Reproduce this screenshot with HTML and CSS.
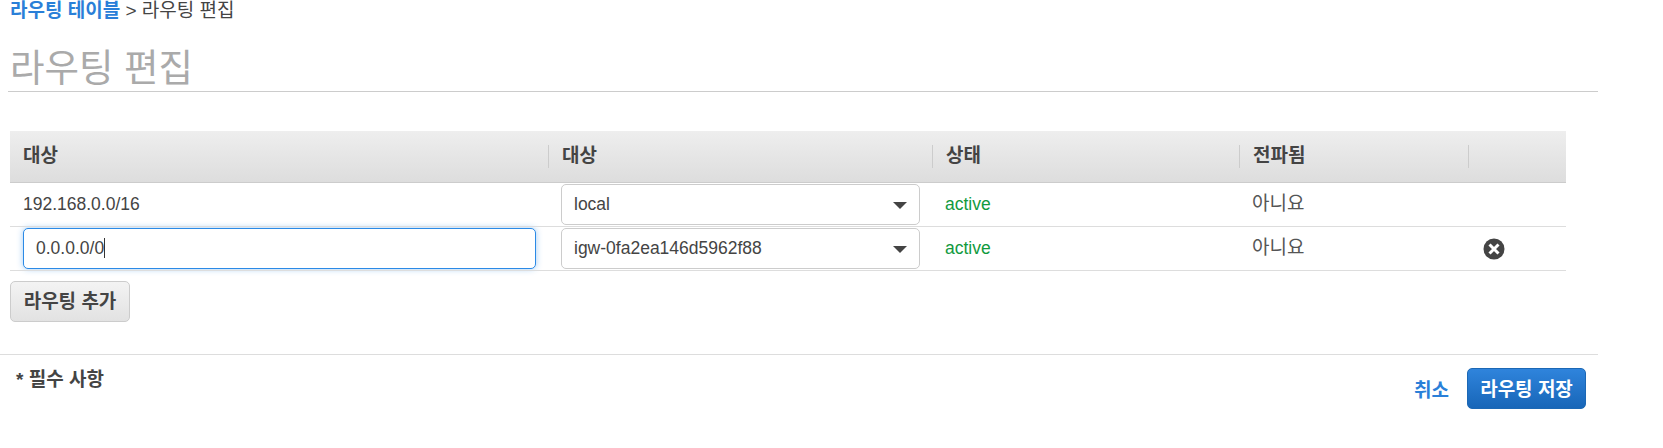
FILE: index.html
```html
<!DOCTYPE html>
<html lang="ko">
<head>
  <meta charset="UTF-8">
  <title>라우팅 편집</title>
  <link rel="stylesheet" href="styles.css">
</head>
<body>
  <div class="page">
    <div class="breadcrumb"><a href="#">라우팅 테이블</a> &gt; 라우팅 편집</div>
    <h1 class="title">라우팅 편집</h1>

    <table class="routes">
      <thead>
        <tr>
          <th class="col-first"><span class="th-label th-first">대상</span></th>
          <th class="col-target"><span class="th-label">대상</span></th>
          <th class="col-status"><span class="th-label">상태</span></th>
          <th class="col-prop"><span class="th-label">전파됨</span></th>
          <th><span class="th-label">&nbsp;</span></th>
        </tr>
      </thead>
      <tbody>
        <tr>
          <td class="cell-first">192.168.0.0/16</td>
          <td class="cell-target">
            <div class="select"><span>local</span><span class="arrow"></span></div>
          </td>
          <td class="active">active</td>
          <td class="propagated">아니요</td>
          <td></td>
        </tr>
        <tr>
          <td class="cell-first">
            <div class="input">0.0.0.0/0<span class="caret"></span></div>
          </td>
          <td class="cell-target">
            <div class="select"><span>igw-0fa2ea146d5962f88</span><span class="arrow"></span></div>
          </td>
          <td class="active">active</td>
          <td class="propagated">아니요</td>
          <td class="cell-remove">
            <svg class="remove" width="22" height="22" viewBox="0 0 22 22">
              <circle cx="11" cy="11" r="10.5" fill="#444"/>
              <path d="M6.5 6.5l9 9M15.5 6.5l-9 9" stroke="#fff" stroke-width="3" fill="none"/>
            </svg>
          </td>
        </tr>
      </tbody>
    </table>

    <button class="btn btn-add" type="button">라우팅 추가</button>

    <div class="footer">
      <div class="required">* 필수 사항</div>
      <div class="actions">
        <a class="cancel" href="#">취소</a>
        <button class="btn btn-save" type="button">라우팅 저장</button>
      </div>
    </div>
  </div>
</body>
</html>
```

FILE: styles.css
```css
* {
  box-sizing: border-box;
}
body {
  margin: 0;
  background: #fff;
  color: #444;
  font-family: "Liberation Sans", "Noto Sans CJK KR", sans-serif;
  font-size: 17.5px;
}
.page {
  width: 1598px;
}
a {
  color: #2a7fd8;
  text-decoration: none;
}
.breadcrumb {
  height: 20px;
  padding-left: 10px;
  line-height: 22px;
  font-size: 19px;
}
.breadcrumb a {
  font-weight: bold;
}
.title {
  margin: 0 0 0 8px;
  height: 72px;
  padding: 27px 0 0 2px;
  border-bottom: 1px solid #ccc;
  color: #aaa;
  font-size: 37.5px;
  font-weight: normal;
  line-height: 42px;
}
.routes {
  width: 1556px;
  margin: 39px 0 0 10px;
  table-layout: fixed;
  border-collapse: collapse;
}
.routes th {
  height: 51px;
  padding: 0;
  background: linear-gradient(#eeeeee, #dddddd);
  border-bottom: 1px solid #ccc;
  text-align: left;
  font-size: 19px;
  font-weight: bold;
  vertical-align: middle;
}
.col-first {
  width: 538px;
}
.col-target {
  width: 384px;
}
.col-status {
  width: 307px;
}
.col-prop {
  width: 229px;
}
.th-label {
  display: block;
  height: 23px;
  padding-left: 13px;
  border-left: 1px solid #ccc;
  line-height: 21px;
}
.th-first {
  border-left: 0;
}
.routes td {
  height: 44px;
  padding: 0 0 0 13px;
  border-bottom: 1px solid #ddd;
  vertical-align: middle;
}
.routes .cell-first {
  padding: 0 12px 0 13px;
}
.routes .cell-target {
  padding: 0 12px 0 13px;
}
.active {
  color: #119a3e;
}
.routes .propagated {
  padding-bottom: 5px;
  color: #555;
  font-size: 19px;
}
.routes .cell-remove {
  padding: 0 0 0 15px;
}
.remove {
  display: block;
  margin-top: 1px;
}
.select,
.input {
  display: flex;
  align-items: center;
  height: 41px;
  padding: 0 12px;
  border: 1px solid #ccc;
  border-radius: 5px;
  background: #fff;
}
.select {
  justify-content: space-between;
}
.arrow {
  width: 0;
  height: 0;
  border-left: 7px solid transparent;
  border-right: 7px solid transparent;
  border-top: 7px solid #444;
  margin-top: 2px;
}
.input {
  justify-content: flex-start;
  border-color: #2b8ae6;
  box-shadow: 0 0 6px rgba(43, 138, 230, 0.45);
}
.caret {
  display: inline-block;
  width: 1px;
  height: 20px;
  background: #333;
}
.btn {
  height: 41px;
  padding: 0 0 2px;
  border-radius: 5px;
  font-family: inherit;
  font-size: 19px;
  font-weight: bold;
}
.btn-add {
  display: block;
  width: 120px;
  margin: 10px 0 0 10px;
  padding-bottom: 4px;
  border: 1px solid #ccc;
  background: linear-gradient(#f3f3f3, #e2e2e2);
  color: #444;
}
.footer {
  display: flex;
  justify-content: space-between;
  height: 80px;
  margin-top: 32px;
  padding: 13px 12px 0 16px;
  border-top: 1px solid #ddd;
}
.required {
  padding-top: 1px;
  font-size: 19px;
  font-weight: bold;
  line-height: 22px;
}
.actions {
  display: flex;
  align-items: center;
  gap: 18px;
  height: 41px;
}
.cancel {
  font-size: 19px;
  font-weight: bold;
}
.btn-save {
  width: 119px;
  border: 1px solid #1c68b5;
  background: linear-gradient(#2f84dc, #1866b8);
  color: #fff;
}
```
